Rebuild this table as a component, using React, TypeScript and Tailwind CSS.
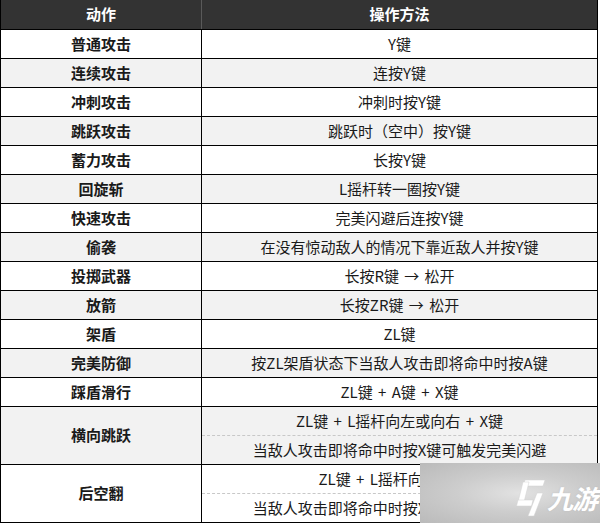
import React from 'react'

type Row = { name: string; ops: string[] }

const rows: Row[] = [
  { name: '普通攻击', ops: ['Y键'] },
  { name: '连续攻击', ops: ['连按Y键'] },
  { name: '冲刺攻击', ops: ['冲刺时按Y键'] },
  { name: '跳跃攻击', ops: ['跳跃时（空中）按Y键'] },
  { name: '蓄力攻击', ops: ['长按Y键'] },
  { name: '回旋斩', ops: ['L摇杆转一圈按Y键'] },
  { name: '快速攻击', ops: ['完美闪避后连按Y键'] },
  { name: '偷袭', ops: ['在没有惊动敌人的情况下靠近敌人并按Y键'] },
  { name: '投掷武器', ops: ['长按R键 → 松开'] },
  { name: '放箭', ops: ['长按ZR键 → 松开'] },
  { name: '架盾', ops: ['ZL键'] },
  { name: '完美防御', ops: ['按ZL架盾状态下当敌人攻击即将命中时按A键'] },
  { name: '踩盾滑行', ops: ['ZL键 + A键 + X键'] },
  { name: '横向跳跃', ops: ['ZL键 + L摇杆向左或向右 + X键', '当敌人攻击即将命中时按X键可触发完美闪避'] },
  { name: '后空翻', ops: ['ZL键 + L摇杆向后 + X键', '当敌人攻击即将命中时按X键可触发完美闪避'] },
]

// 九游 watermark in the bottom-right corner
function Watermark() {
  return (
    <div className="absolute left-[420px] top-[463px] w-[180px] h-[60px] bg-[radial-gradient(ellipse_at_55%_50%,#e2e2e2_0%,#cdcdcd_45%,#bababa_100%)] flex items-center justify-end pr-[3px] gap-[1px]">
      <svg width="30" height="38" viewBox="0 0 30 38" className="mt-[10px]">
        <g fill="#ffffff" stroke="#d0d0d0" strokeWidth="0.5">
          <polygon points="9,1 29,1 27,7 7,7" />
          <polygon points="7,3 13,3 8,23 2,23" />
          <polygon points="2,21 17,21 15.5,27 0.5,27" />
          <polygon points="21,14 27,14 18,37 12,37" />
        </g>
      </svg>
      <span className="text-[26px] font-bold italic text-white leading-none tracking-[-1px] [text-shadow:0_0_2px_#bdbdbd] mt-[10px]">
        九游
      </span>
    </div>
  )
}

export default function App() {
  return (
    <div
      className="relative w-[600px] h-[523px] bg-white overflow-hidden text-[#1a1a1a]"
      style={{ fontFamily: '"Noto Sans CJK SC", "Noto Sans", sans-serif' }}
    >
      <div className="w-[598px] border-l border-r border-b border-black">
        <div className="grid grid-cols-[201px_1fr] h-[29px] bg-[#333333] text-white font-bold text-[15px]">
          <div className="flex items-center justify-center border-r border-[#5a5a5a]">动作</div>
          <div className="flex items-center justify-center">操作方法</div>
        </div>
        {rows.map((r, i) => (
          <div
            key={r.name}
            className={
              'grid grid-cols-[201px_1fr] border-t border-black ' +
              (i % 2 === 1 ? 'bg-[#f2f2f2]' : 'bg-white')
            }
          >
            <div className="flex items-center justify-center border-r border-black font-bold text-[15px]">
              {r.name}
            </div>
            <div className="flex flex-col">
              {r.ops.map((op, j) => (
                <div
                  key={j}
                  className={
                    'flex items-center justify-center text-[15px] [word-spacing:2px] ' +
                    (j > 0 ? 'h-[29px] border-t border-dashed border-[#c8c8c8]' : 'h-[28px]')
                  }
                >
                  {op}
                </div>
              ))}
            </div>
          </div>
        ))}
      </div>
      <Watermark />
    </div>
  )
}
